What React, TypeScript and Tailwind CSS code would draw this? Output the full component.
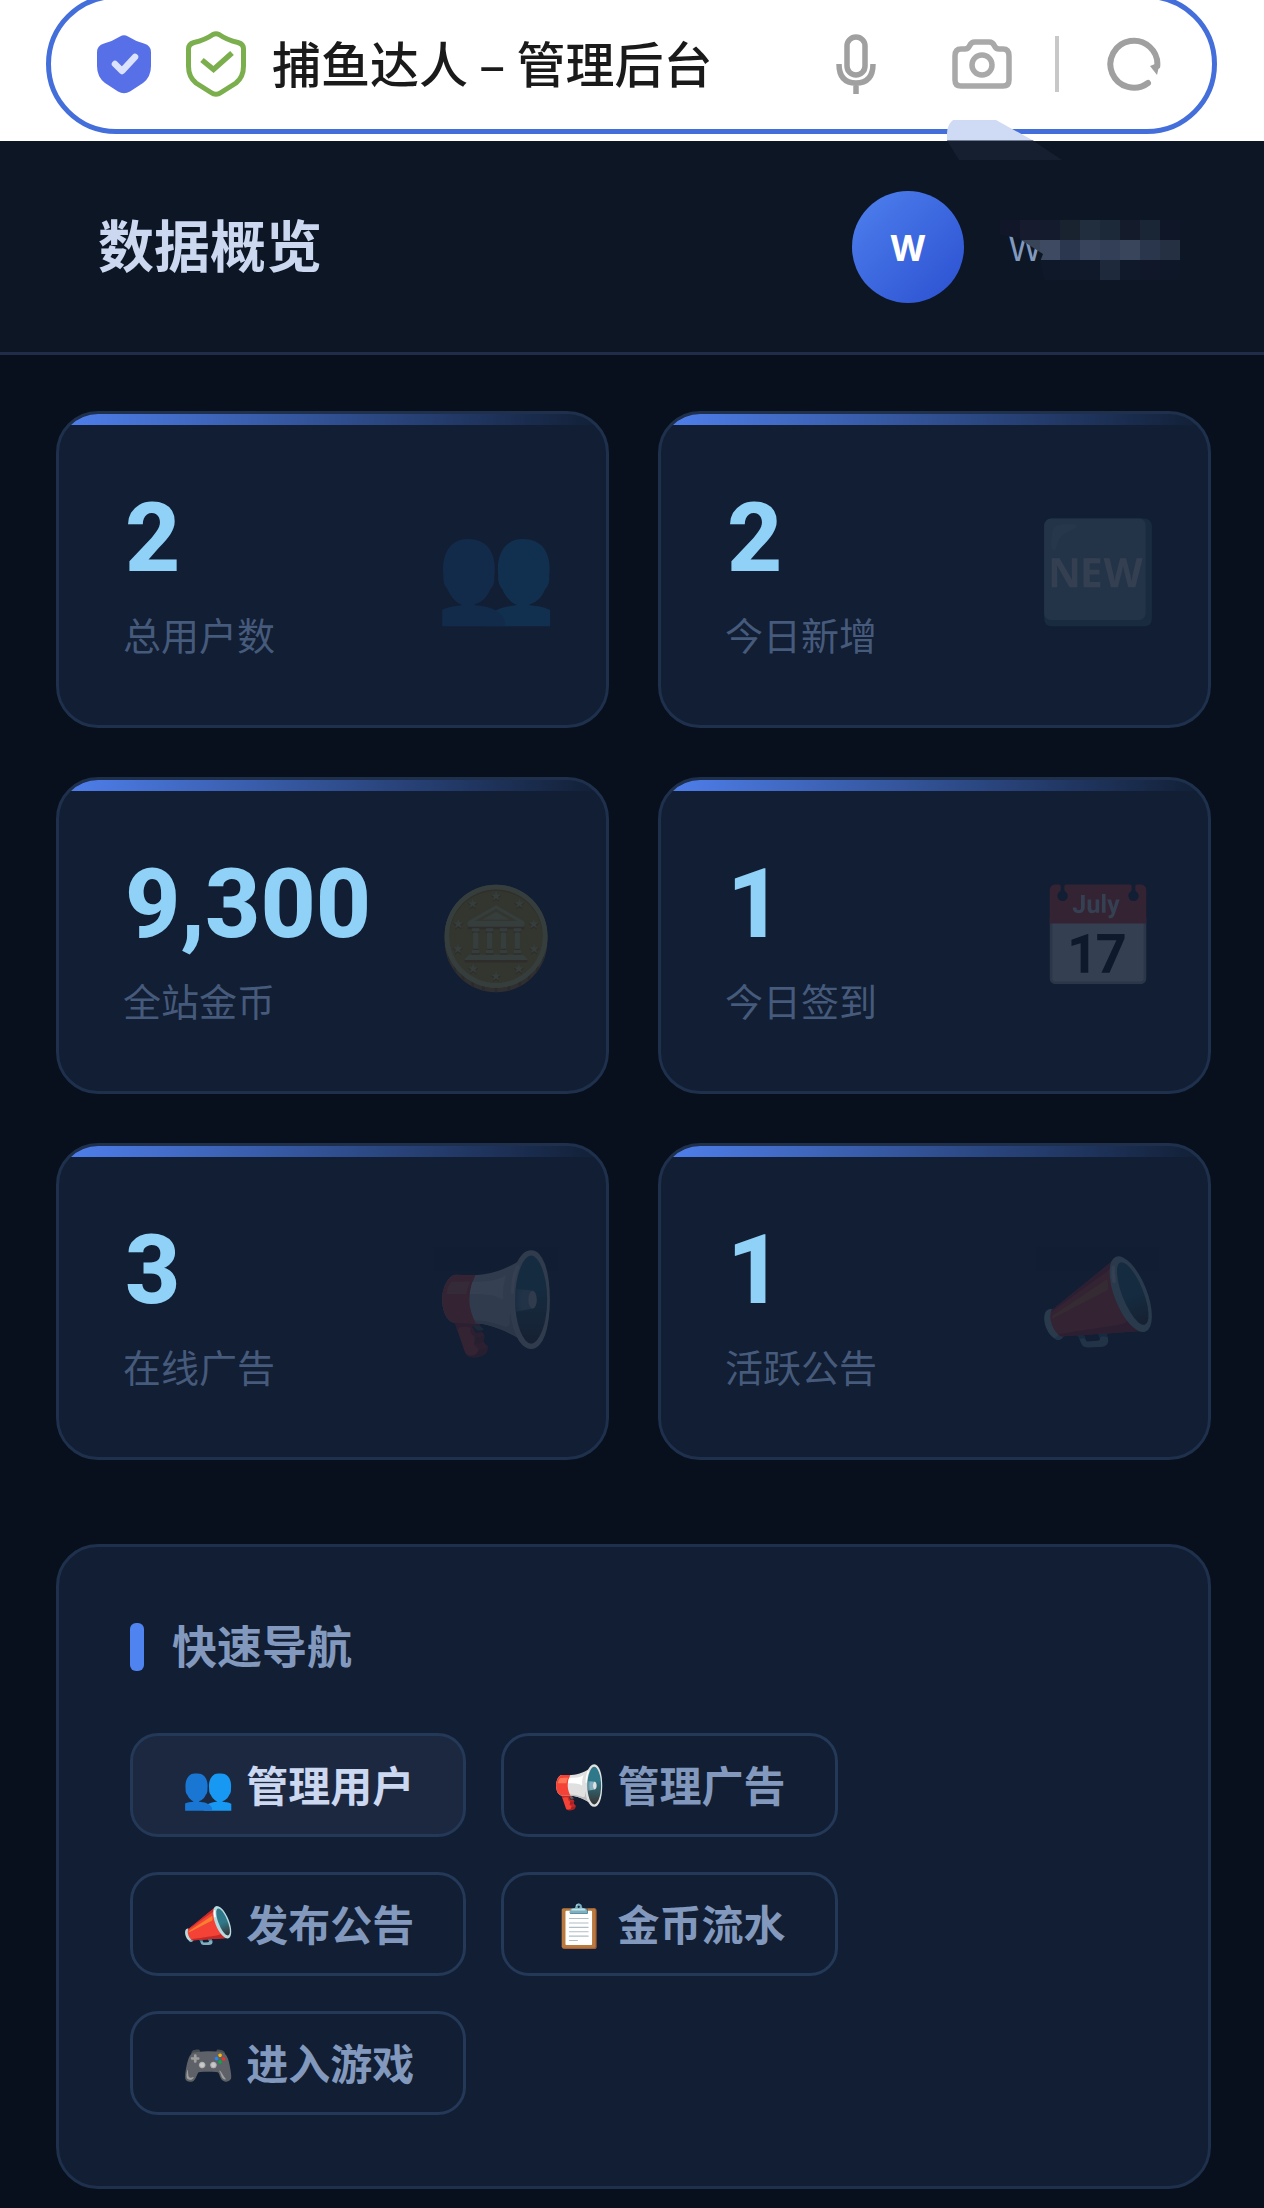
import { useState } from "react";

interface Stat {
  value: string;
  label: string;
  icon: string;
}

interface NavItem {
  label: string;
  icon: string;
}

const stats: Stat[] = [
  { value: "2", label: "总用户数", icon: "👥" },
  { value: "2", label: "今日新增", icon: "🆕" },
  { value: "9,300", label: "全站金币", icon: "🪙" },
  { value: "1", label: "今日签到", icon: "📅" },
  { value: "3", label: "在线广告", icon: "📢" },
  { value: "1", label: "活跃公告", icon: "📣" },
];

const navItems: NavItem[] = [
  { label: "管理用户", icon: "👥" },
  { label: "管理广告", icon: "📢" },
  { label: "发布公告", icon: "📣" },
  { label: "金币流水", icon: "📋" },
  { label: "进入游戏", icon: "🎮" },
];

// Censored part of the user name, one entry per 20px block
const mosaic = [
  ["#111728", "#161c2d", "#141b2c", "#19232f", "#212e3e", "#1b2938", "#141c2c", "#1a2635", "#0f1628"],
  ["#3a475c", "#384559", "#3d4a61", "#2b374e", "#38445b", "#333f57", "#38455b", "#2a364b", "#253142"],
  ["", "", "#0f1829", "#10192a", "#10192a", "#1e293b", "#10192a", "#0f1728", "#0e1728"],
];

const AddressBar = () => (
  <div className="relative h-[141px] bg-white pl-[46px] pr-[47px]">
    <div className="-mt-[6px] inline-flex h-[140px] w-full items-center rounded-full border-[5px] border-[#446fdb] pr-[51px] pl-[46px]">
      <svg className="h-[60px] w-[54px] shrink-0" viewBox="0 0 54 60" aria-hidden="true">
        <path
          d="M23 2.5Q27 0 31 2.5Q38 7 47 9.500Q54 11.500 54 18V32Q54 43 46 49L33 57.500Q27 61 21 57.500L8 49Q0 43 0 32V18Q0 11.500 7 9.500Q16 7 23 2.500Z"
          fill="#5770e8"
        />
        <path d="M18 30L25 37L38 23" fill="none" stroke="#dbe2fc" strokeWidth="6.500" strokeLinecap="round" strokeLinejoin="round" />
      </svg>
      <svg className="ml-[35px] h-[66px] w-[60px] shrink-0" viewBox="0 0 60 66" aria-hidden="true">
        <g fill="none" stroke="#7bae4c" strokeWidth="5">
          <path d="M27 3.500Q30 2 33 3.500Q41 9 52 11.500Q57.500 13 57.500 18V35Q57.500 46 50 52L35 61.500Q30 65 25 61.500L10 52Q2.500 46 2.500 35V18Q2.500 13 8 11.500Q19 9 27 3.500Z" />
          <path d="M16 29L27.500 38.500L46 22" strokeWidth="5.500" />
        </g>
      </svg>
      <input
        className="ml-[26px] min-w-0 flex-1 bg-transparent pb-1 text-[49px] leading-[64px] font-medium text-[#1a1a1a] outline-none"
        aria-label="地址栏"
        defaultValue="捕鱼达人 – 管理后台"
      />
      <button aria-label="语音搜索">
        <svg className="h-[60px] w-10" viewBox="0 0 40 60" fill="none" stroke="#a0a0a0" strokeWidth="5.500">
          <rect x="11" y="3" width="18" height="38" rx="9" />
          <path d="M3 30Q3 49 20 49Q37 49 37 30M20 49V60" />
        </svg>
      </button>
      <button className="ml-[76px]" aria-label="拍照搜索">
        <svg className="h-[50px] w-[60px]" viewBox="0 0 60 50" fill="none" stroke="#a9a9a9" strokeWidth="5.500">
          <path d="M9 10H13Q16 10 17.500 7Q19 3 23 3H37Q41 3 42.500 7Q44 10 47 10H51Q57 10 57 17V41Q57 47 51 47H9Q3 47 3 41V17Q3 10 9 10Z" />
          <circle cx="30" cy="26" r="10" />
        </svg>
      </button>
      <span className="mr-12 ml-[43px] h-14 w-1 shrink-0 bg-[#c8c8c8]" />
      <button aria-label="刷新">
        <svg className="h-[54px] w-[54px]" viewBox="0 0 54 54">
          <path d="M41 46A23.500 23.500 0 1 1 50.300 29" fill="none" stroke="#a0a0a0" strokeWidth="6" strokeLinecap="round" />
          <path d="M43 29L53 25L50 38Z" fill="#a0a0a0" />
        </svg>
      </button>
    </div>
    <svg className="absolute top-[120px] right-[202px] h-10 w-[115px]" viewBox="0 0 115 40" aria-hidden="true">
      <path d="M6 0H49L87 21H0V14Q0 5 6 0Z" fill="#cfdbf4" />
      <path d="M0 20.500H86L115 40H12Z" fill="#161f2f" />
    </svg>
  </div>
);

const StatCard = ({ value, label, icon }: Stat) => (
  <div className="relative overflow-hidden rounded-[42px] border-[3px] border-[#1f304d] bg-[#111e33] px-16 py-[63px]">
    <div className="absolute inset-x-0 top-0 h-[11px] bg-linear-to-r from-[#4f80ee] to-transparent" />
    <div className="pt-0.5 pl-0.5 font-[Roboto] text-[96px] leading-[118px] font-extrabold text-[#90d1f8]">{value}</div>
    <div className="mt-[9px] text-[38px] leading-[56px] text-[#465a7b]">{label}</div>
    <span
      className="absolute top-1/2 right-[49px] -translate-y-1/2 pt-1.5 font-['Noto_Color_Emoji'] text-[98px] leading-none opacity-15"
      aria-hidden="true"
    >
      {icon}
    </span>
  </div>
);

const App = () => {
  const [activeNav, setActiveNav] = useState(0);

  return (
    <div className="min-h-screen bg-[#07101c] font-['Noto_Sans_CJK_SC','Noto_Color_Emoji',sans-serif]">
      <AddressBar />

      <header className="flex h-[214px] items-center justify-between border-b-[3px] border-[#1f2d4a] bg-[#0c1625] pr-[84px] pl-[98px]">
        <h1 className="pb-2 text-[56px] leading-[80px] font-bold text-[#ccd7f0]">数据概览</h1>
        <div className="flex items-center gap-9">
          <div className="flex size-28 items-center justify-center rounded-full bg-linear-135 from-[#4f80ee] to-[#2c4fd0] pt-1 font-[Inter] text-[35px] font-bold text-white">
            W
          </div>
          <div className="relative mt-1.5 h-[60px] w-[180px]">
            <span className="pl-2 font-[Inter] text-[35px] leading-[56px] text-[#8299bd]">W</span>
            <svg className="absolute inset-0 h-[60px] w-[180px]" viewBox="0 0 180 60" shapeRendering="crispEdges" aria-hidden="true">
              <clipPath id="smear">
                <path d="M0 0H180V60H44L40 42L43 34L18 18L0 15Z" />
              </clipPath>
              <g clipPath="url(#smear)">
                {mosaic.map((row, y) =>
                  row.map((fill, x) =>
                    fill ? <rect key={`${x}-${y}`} x={x * 20} y={y * 20} width="20" height="20" fill={fill} /> : null
                  )
                )}
              </g>
            </svg>
          </div>
        </div>
      </header>

      <main className="pt-14 pr-[53px] pb-5 pl-14">
        <section className="grid grid-cols-2 gap-[49px]">
          {stats.map((stat) => (
            <StatCard key={stat.label} {...stat} />
          ))}
        </section>

        <section className="mt-[84px] rounded-[42px] border-[3px] border-[#1f304d] bg-[#111e33] p-[71px]">
          <div className="flex items-center gap-7">
            <span className="h-12 w-3.5 rounded-md bg-[#4f83f0]" />
            <h2 className="pb-1 text-[45px] leading-[54px] font-bold text-[#8299bd]">快速导航</h2>
          </div>
          <nav className="mt-[57px] flex flex-wrap gap-[35px]">
            {navItems.map((item, index) => (
              <button
                key={item.label}
                onClick={() => setActiveNav(index)}
                className={`flex h-[104px] items-center gap-3 rounded-[28px] border-[3px] border-[#243857] px-[49px] pb-1 text-[42px] font-bold ${
                  activeNav === index ? "bg-[#1c2840] text-[#ccd7f0]" : "text-[#8299bd]"
                }`}
              >
                <span aria-hidden="true">{item.icon}</span>
                {item.label}
              </button>
            ))}
          </nav>
        </section>
      </main>
    </div>
  );
};

export default App;
